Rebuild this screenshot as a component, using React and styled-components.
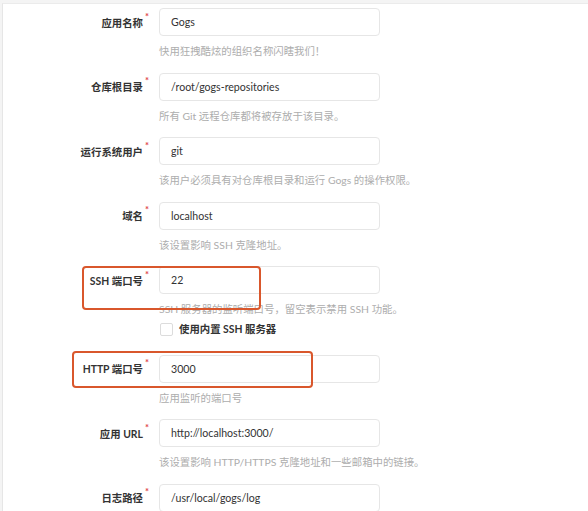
import styled, { createGlobalStyle } from "styled-components";

const GlobalStyle = createGlobalStyle`
  html, body {
    margin: 0;
    padding: 0;
    background: #f4f4f4;
  }
  body {
    font-family: Lato, "Noto Sans CJK SC", sans-serif;
  }
`;

const fields = [
  { label: "应用名称", value: "Gogs", help: "快用狂拽酷炫的组织名称闪瞎我们！" },
  { label: "仓库根目录", value: "/root/gogs-repositories", help: "所有 Git 远程仓库都将被存放于该目录。" },
  { label: "运行系统用户", value: "git", help: "该用户必须具有对仓库根目录和运行 Gogs 的操作权限。" },
  { label: "域名", value: "localhost", help: "该设置影响 SSH 克隆地址。" },
  {
    label: "SSH 端口号",
    value: "22",
    help: "SSH 服务器的监听端口号，留空表示禁用 SSH 功能。",
    checkbox: "使用内置 SSH 服务器",
  },
  { label: "HTTP 端口号", value: "3000", help: "应用监听的端口号" },
  { label: "应用 URL", value: "http://localhost:3000/", help: "该设置影响 HTTP/HTTPS 克隆地址和一些邮箱中的链接。" },
  { label: "日志路径", value: "/usr/local/gogs/log" },
];

export default function App() {
  return (
    <>
      <GlobalStyle />
      <Page>
        <Card>
          {fields.map((f) => (
            <Field key={f.label}>
              <Label>
                {f.label}
                <Star>*</Star>
              </Label>
              <Input defaultValue={f.value} />
              {f.help && <Help>{f.help}</Help>}
              {f.checkbox && (
                <CheckRow>
                  <Box type="checkbox" />
                  <span>{f.checkbox}</span>
                </CheckRow>
              )}
            </Field>
          ))}
          <Mark $left={79} $top={262} $width={179} $height={44} />
          <Mark $left={69} $top={347} $width={241} $height={37} />
        </Card>
      </Page>
    </>
  );
}

const Page = styled.div`
  width: 588px;
  height: 511px;
  overflow: hidden;
  padding: 3px 0 0 2px;
  box-sizing: border-box;
`;

const Card = styled.div`
  position: relative;
  background: #ffffff;
  border-top: 1px solid #ebebeb;
  border-left: 1px solid #e6e6e6;
  min-height: 520px;
  padding-top: 4px;
`;

const Field = styled.div`
  display: grid;
  grid-template-columns: 147px 221px;
  column-gap: 9px;
  align-items: center;
  margin-bottom: 14.5px;
`;

const Label = styled.label`
  justify-self: end;
  font-family: Lato, "Noto Sans CJK SC", sans-serif;
  font-size: 10.4px;
  font-weight: 700;
  color: #333333;
  white-space: nowrap;
  display: flex;
  align-items: flex-start;
  margin-right: 1px;
`;

const Star = styled.span`
  color: #e0464a;
  font-size: 9.5px;
  line-height: 1;
  margin: -3px 0 0 2px;
`;

const Input = styled.input`
  box-sizing: border-box;
  width: 221px;
  height: 28px;
  border: 1px solid #e6e6e6;
  border-radius: 4px;
  padding: 0 11px;
  font-family: Lato, "Liberation Sans", sans-serif;
  font-size: 10.6px;
  color: #333333;
  background: #fff;
  outline: none;
`;

const Help = styled.div`
  grid-column: 2;
  margin-top: 8px;
  font-family: Lato, "Noto Sans CJK SC", sans-serif;
  font-size: 10.4px;
  line-height: 14px;
  color: #adadad;
  white-space: nowrap;
`;

const CheckRow = styled.label`
  grid-column: 2;
  margin: 6px 0 4px 1px;
  display: flex;
  align-items: center;
  gap: 6px;
  font-family: Lato, "Noto Sans CJK SC", sans-serif;
  font-size: 10.4px;
  font-weight: 700;
  color: #333333;
  line-height: 14px;
`;

const Box = styled.input`
  appearance: none;
  margin: 0;
  width: 13px;
  height: 13px;
  border: 1px solid #dcdcdc;
  border-radius: 2px;
  background: #fff;
`;

const Mark = styled.div`
  position: absolute;
  left: ${(p) => p.$left}px;
  top: ${(p) => p.$top}px;
  width: ${(p) => p.$width}px;
  height: ${(p) => p.$height}px;
  border: 2px solid #d9572c;
  border-radius: 4px;
  box-sizing: border-box;
  pointer-events: none;
`;
